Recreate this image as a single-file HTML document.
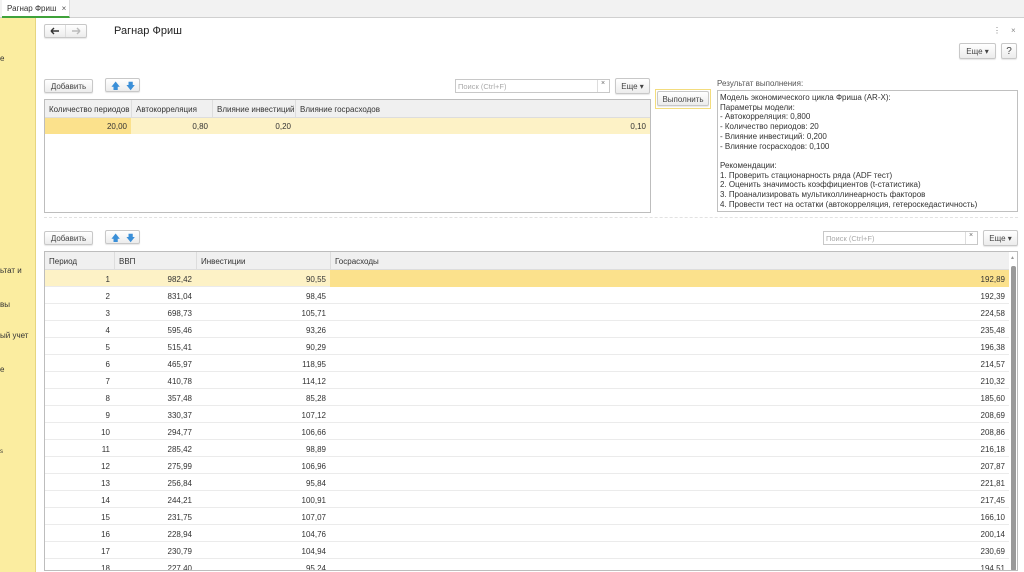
<!DOCTYPE html>
<html><head><meta charset="utf-8"><style>
*{box-sizing:border-box;margin:0;padding:0}
body{width:1024px;height:572px;overflow:hidden;background:#fff;font-family:"Liberation Sans",sans-serif;font-size:8px;color:#333;position:relative}
.a{position:absolute}
.btn{position:absolute;border:1px solid #c8c8c8;border-radius:2px;background:linear-gradient(#fff,#ececec);font-size:8px;color:#444;text-align:center;box-shadow:0 1px 1px rgba(0,0,0,.1)}
.tbl{position:absolute;border:1px solid #bdbdbd}
.hdr{position:absolute;left:0;right:0;top:0;background:#f0f0f0;border-bottom:1px solid #ddd}
.c{position:absolute;white-space:nowrap}
.row{position:absolute;left:0;height:17px;border-bottom:1px solid #ebebeb}
.r{text-align:right}
</style></head><body>
<div class="a" style="left:0;top:0;width:1024px;height:18px;background:#f2f2f2;border-bottom:1px solid #d0d0d0"></div>
<div class="a" style="left:2px;top:0;width:68px;height:18px;background:#fff;border-right:1px solid #ddd;border-bottom:2px solid #3fa23a;font-size:8px;padding:4px 0 0 5px">Рагнар Фриш <span style="margin-left:3px;color:#555">×</span></div>
<div class="a" style="left:0;top:18px;width:36px;height:554px;background:#fbeda0;border-right:1px solid #e6d580"></div>
<div class="a" style="left:0;top:54px;font-size:8px">е</div>
<div class="a" style="left:0;top:266px">ьтат и</div>
<div class="a" style="left:0;top:300px">вы</div>
<div class="a" style="left:0;top:331px">ый учет</div>
<div class="a" style="left:0;top:365px">е</div>
<div class="a" style="left:0;top:449px;font-size:6px">s</div>

<div class="btn" style="left:44px;top:24px;width:43px;height:14px"></div>
<div class="a" style="left:65px;top:25px;height:12px;border-left:1px solid #ddd"></div>
<svg class="a" style="left:50px;top:27px" width="10" height="8"><path d="M1 4H9M1 4L4 1M1 4L4 7" stroke="#333" stroke-width="1.4" fill="none"/></svg>
<svg class="a" style="left:71px;top:27px" width="10" height="8"><path d="M1 4H9M9 4L6 1M9 4L6 7" stroke="#bbb" stroke-width="1.4" fill="none"/></svg>
<div class="a" style="left:114px;top:25px;font-size:11px;color:#222">Рагнар Фриш</div>
<div class="a" style="left:993px;top:26px;color:#777">⋮</div>
<div class="a" style="left:1011px;top:26px;color:#888">×</div>
<div class="btn" style="left:959px;top:43px;width:37px;height:16px;padding-top:3px">Еще ▾</div>
<div class="btn" style="left:1001px;top:43px;width:16px;height:16px;padding-top:2px;font-size:10px">?</div>

<div class="btn" style="left:44px;top:79px;width:49px;height:14px;padding-top:2px">Добавить</div>
<div class="btn" style="left:105px;top:78px;width:35px;height:14px"></div>
<div class="a" style="left:111px;top:79px;color:#3a8fd8;font-size:9px">🡅</div>
<div class="a" style="left:126px;top:79px;color:#3a8fd8;font-size:9px">🡇</div>
<div class="a" style="left:455px;top:79px;width:155px;height:14px;border:1px solid #c8c8c8;color:#aaa;padding:2px 0 0 2px;font-size:7.5px">Поиск (Ctrl+F)</div>
<div class="a" style="left:597px;top:80px;height:12px;border-left:1px solid #ddd;padding-left:3px;color:#666;font-size:7px">×</div>
<div class="btn" style="left:615px;top:78px;width:35px;height:16px;padding-top:3px">Еще ▾</div>

<div class="tbl" style="left:44px;top:99px;width:607px;height:114px">
<div class="hdr" style="height:18px"></div>
<div class="c" style="left:4px;top:5px">Количество периодов</div>
<div class="c" style="left:91px;top:5px">Автокорреляция</div>
<div class="c" style="left:172px;top:5px">Влияние инвестиций</div>
<div class="c" style="left:255px;top:5px">Влияние госрасходов</div>
<div class="a" style="left:86px;top:0;height:18px;border-left:1px solid #ddd"></div>
<div class="a" style="left:167px;top:0;height:18px;border-left:1px solid #ddd"></div>
<div class="a" style="left:250px;top:0;height:18px;border-left:1px solid #ddd"></div>
<div class="a" style="left:0;top:18px;width:605px;height:16px;background:#fdf2c6"></div>
<div class="a" style="left:0;top:18px;width:86px;height:16px;background:#fbe18c"></div>
<div class="c r" style="left:0;width:82px;top:22px">20,00</div>
<div class="c r" style="left:86px;width:77px;top:22px">0,80</div>
<div class="c r" style="left:167px;width:79px;top:22px">0,20</div>
<div class="c r" style="left:250px;width:351px;top:22px">0,10</div>
</div>

<div class="a" style="left:655px;top:89px;width:56px;height:20px;border:1px solid #f3dc7d"></div>
<div class="btn" style="left:657px;top:91px;width:52px;height:15px;padding-top:3px">Выполнить</div>
<div class="a" style="left:717px;top:79px;color:#555">Результат выполнения:</div>
<div class="a" style="left:717px;top:90px;width:301px;height:122px;border:1px solid #c0c0c0;padding:2px 0 0 2px;line-height:9.7px;color:#333">Модель экономического цикла Фриша (AR-X):<br>Параметры модели:<br>- Автокорреляция: 0,800<br>- Количество периодов: 20<br>- Влияние инвестиций: 0,200<br>- Влияние госрасходов: 0,100<br><br>Рекомендации:<br>1. Проверить стационарность ряда (ADF тест)<br>2. Оценить значимость коэффициентов (t-статистика)<br>3. Проанализировать мультиколлинеарность факторов<br>4. Провести тест на остатки (автокорреляция, гетероскедастичность)</div>
<div class="a" style="left:44px;top:217px;width:974px;border-top:1px dashed #e2e2e2"></div>

<div class="btn" style="left:44px;top:231px;width:49px;height:14px;padding-top:2px">Добавить</div>
<div class="btn" style="left:105px;top:230px;width:35px;height:14px"></div>
<div class="a" style="left:111px;top:231px;color:#3a8fd8;font-size:9px">🡅</div>
<div class="a" style="left:126px;top:231px;color:#3a8fd8;font-size:9px">🡇</div>
<div class="a" style="left:823px;top:231px;width:155px;height:14px;border:1px solid #c8c8c8;color:#aaa;padding:2px 0 0 2px;font-size:7.5px">Поиск (Ctrl+F)</div>
<div class="a" style="left:965px;top:232px;height:12px;border-left:1px solid #ddd;padding-left:3px;color:#666;font-size:7px">×</div>
<div class="btn" style="left:983px;top:230px;width:35px;height:16px;padding-top:3px">Еще ▾</div>

<div class="tbl" style="left:44px;top:251px;width:974px;height:320px;overflow:hidden">
<div class="hdr" style="height:18px"></div>
<div class="c" style="left:4px;top:5px">Период</div>
<div class="c" style="left:74px;top:5px">ВВП</div>
<div class="c" style="left:156px;top:5px">Инвестиции</div>
<div class="c" style="left:290px;top:5px">Госрасходы</div>
<div class="a" style="left:69px;top:0;height:18px;border-left:1px solid #ddd"></div>
<div class="a" style="left:151px;top:0;height:18px;border-left:1px solid #ddd"></div>
<div class="a" style="left:285px;top:0;height:18px;border-left:1px solid #ddd"></div>
<div class="a" style="left:964px;top:0;width:9px;height:320px;background:#fff"></div>
<div class="a" style="left:966px;top:14px;width:5px;height:305px;background:#9a9a9a;border-radius:2px"></div>
<div class="a" style="left:965px;top:3px;font-size:5px;color:#999">▲</div>
<div id="rows"></div>
</div>
<script>
var d=[[1,"982,42","90,55","192,89"],[2,"831,04","98,45","192,39"],[3,"698,73","105,71","224,58"],[4,"595,46","93,26","235,48"],[5,"515,41","90,29","196,38"],[6,"465,97","118,95","214,57"],[7,"410,78","114,12","210,32"],[8,"357,48","85,28","185,60"],[9,"330,37","107,12","208,69"],[10,"294,77","106,66","208,86"],[11,"285,42","98,89","216,18"],[12,"275,99","106,96","207,87"],[13,"256,84","95,84","221,81"],[14,"244,21","100,91","217,45"],[15,"231,75","107,07","166,10"],[16,"228,94","104,76","200,14"],[17,"230,79","104,94","230,69"],[18,"227,40","95,24","194,51"]];
var h="";
d.forEach(function(r,i){var t=18+i*17;
var bg=i==0?"background:#fdf2c6;":"";
h+='<div class="row" style="top:'+t+'px;width:964px;'+bg+'"></div>';
if(i==0)h+='<div class="a" style="left:285px;top:18px;width:679px;height:17px;background:#fbe18c"></div>';
h+='<div class="c r" style="left:0;width:65px;top:'+(t+5)+'px">'+r[0]+'</div>';
h+='<div class="c r" style="left:69px;width:78px;top:'+(t+5)+'px">'+r[1]+'</div>';
h+='<div class="c r" style="left:151px;width:130px;top:'+(t+5)+'px">'+r[2]+'</div>';
h+='<div class="c r" style="left:285px;width:675px;top:'+(t+5)+'px">'+r[3]+'</div>';});
document.getElementById("rows").innerHTML=h;
</script>
</body></html>
